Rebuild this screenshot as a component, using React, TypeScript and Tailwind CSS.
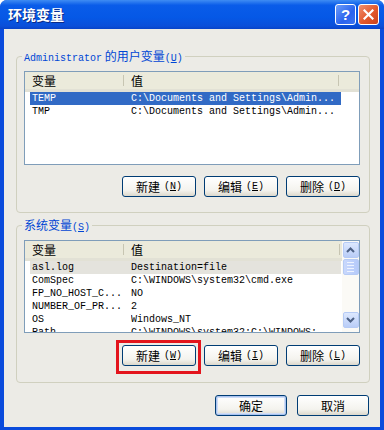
import type { ReactNode } from 'react'

const cjk = "font-['Noto_Sans_CJK_SC','Noto_Sans',sans-serif]"
const mono = "font-['Liberation_Mono','Noto_Sans_CJK_SC',monospace]"

function XpButton({ label, hot, wide = false, primary = false }: { label: string; hot?: string; wide?: boolean; primary?: boolean }) {
  return (
    <button
      className={`h-[21px] ${wide ? 'w-[72px]' : 'w-[74px]'} rounded-[3px] border border-[#003c74] bg-[linear-gradient(#ffffff,#f4f3ee_70%,#dcd8cc)] ${cjk} text-[12px] leading-none text-black flex items-center justify-center gap-[4px] ${primary ? 'shadow-[inset_0_0_0_1px_#a9c3ef,inset_0_0_0_2px_#cfdcf6]' : ''}`}
    >
      <span>{label}</span>
      {hot && (
        <span className={`${mono} text-[10px]`}>
          (<u>{hot}</u>)
        </span>
      )}
    </button>
  )
}

function GroupBox({ title, children, className = '' }: { title: ReactNode; children: ReactNode; className?: string }) {
  return (
    <div className={`relative rounded-[4px] border border-[#d0d0bf] ${className}`}>
      <span className={`absolute -top-[9px] left-[5px] px-[2px] bg-[#ecebe6] text-[12px] leading-[16px] text-[#0046d5] ${cjk}`}>
        {title}
      </span>
      {children}
    </div>
  )
}

function ListHeader({ scroll = false }: { scroll?: boolean }) {
  return (
    <div className={`flex h-[20px] shrink-0 bg-[#ebeadb] border-b-[3px] border-[#e2e1d5] ${cjk} text-[12px] text-black`}>
      <div className="w-[99px] pl-[7px] border-r border-[#c7c5b2] my-[3px] leading-[12px] flex items-center">变量</div>
      <div className={`${scroll ? 'w-[216px]' : 'w-[215px]'} pl-[7px] border-r border-[#c7c5b2] my-[3px] leading-[12px] flex items-center`}>值</div>
      <div className="flex-1" />
    </div>
  )
}

function Row({ name, value, state }: { name: string; value: string; state?: 'sel' | 'grey' }) {
  const bg = state === 'sel' ? 'bg-[#316ac5] text-white' : state === 'grey' ? 'bg-[#e4e3dd] text-black' : 'text-black'
  return (
    <div className={`ml-[5px] w-[311px] h-[13px] shrink-0 flex ${bg} ${mono} text-[10px] leading-[13px] whitespace-nowrap`}>
      <div className="w-[101px] pl-[2px] overflow-hidden">{name}</div>
      <div className="flex-1 overflow-hidden">{value}</div>
    </div>
  )
}

function Arrow({ up }: { up: boolean }) {
  return (
    <div className="h-[16px] w-[16px] rounded-[2px] border border-[#b6cbf5] bg-[linear-gradient(#dce8fe,#b9cdf7)] flex items-center justify-center">
      <svg width="9" height="6" viewBox="0 0 9 6">
        <path d={up ? 'M1 5 L4.5 1.5 L8 5' : 'M1 1 L4.5 4.5 L8 1'} fill="none" stroke="#4d6185" strokeWidth="2" />
      </svg>
    </div>
  )
}

export default function App() {
  return (
    <div className="w-[384px] h-[430px] rounded-t-[7px] bg-[#0a4bdc] flex flex-col overflow-hidden">
      {/* title bar */}
      <div className="h-[29px] shrink-0 flex items-center pl-[8px] pr-[5px] bg-[linear-gradient(#3f8cf3,#0a5ce9_18%,#0558e6_60%,#0b4fd9_90%,#0843c8)]">
        <span className={`${cjk} text-[14px] font-bold text-white [text-shadow:1px_1px_0_#0b2a87]`}>环境变量</span>
        <div className="ml-auto flex gap-[2px]">
          <div className="w-[21px] h-[21px] rounded-[3px] border border-white bg-[linear-gradient(135deg,#6e9ef9,#2a63ee_60%,#3d74f0)] flex items-center justify-center text-white text-[15px] font-bold font-['Liberation_Sans',sans-serif] leading-none">
            ?
          </div>
          <div className="w-[21px] h-[21px] rounded-[3px] border border-white bg-[linear-gradient(135deg,#f09070,#e2582c_55%,#c9431d)] flex items-center justify-center">
            <svg width="11" height="11" viewBox="0 0 11 11">
              <path d="M1.5 1.5 L9.5 9.5 M9.5 1.5 L1.5 9.5" stroke="white" strokeWidth="2.2" strokeLinecap="square" />
            </svg>
          </div>
        </div>
      </div>

      {/* body */}
      <div className="flex-1 mx-[4px] mb-[3px] bg-[#ecebe6] pl-[12px] pr-[10px] flex flex-col">
        <GroupBox
          className="mt-[27px] pt-[14px] pl-[7px] pr-[9px] pb-[15px]"
          title={
            <>
              <span className={mono + ' text-[10px]'}>Administrator</span> 的用户变量<span className={mono + ' text-[10px]'}>(<u>U</u>)</span>
            </>
          }
        >
          <div className="h-[94px] border border-[#7f9db9] bg-white flex flex-col">
            <ListHeader />
            <Row name="TEMP" value="C:\Documents and Settings\Admin..." state="sel" />
            <Row name="TMP" value="C:\Documents and Settings\Admin..." />
          </div>
          <div className="mt-[11px] flex justify-end gap-[8px]">
            <XpButton label="新建" hot="N" />
            <XpButton label="编辑" hot="E" />
            <XpButton label="删除" hot="D" />
          </div>
        </GroupBox>

        <GroupBox
          className="mt-[12px] pt-[14px] pl-[7px] pr-[9px] pb-[16px]"
          title={
            <>
              系统变量<span className={mono + ' text-[10px]'}>(<u>S</u>)</span>
            </>
          }
        >
          <div className="h-[93px] border border-[#7f9db9] bg-white flex overflow-hidden">
            <div className="flex-1 flex flex-col overflow-hidden">
              <ListHeader scroll />
              <Row name="asl.log" value="Destination=file" state="grey" />
              <Row name="ComSpec" value="C:\WINDOWS\system32\cmd.exe" />
              <Row name="FP_NO_HOST_C..." value="NO" />
              <Row name="NUMBER_OF_PR..." value="2" />
              <Row name="OS" value="Windows_NT" />
              <Row name="Path" value="C:\WINDOWS\system32;C:\WINDOWS;..." />
            </div>
            <div className="w-[17px] bg-[#fbfaf6] flex flex-col items-center pt-px pb-[4px]">
              <Arrow up />
              <div className="mt-px h-[16px] w-[16px] rounded-[2px] border border-[#b6cbf5] bg-[linear-gradient(90deg,#c9d8fc,#b5cafa)] flex flex-col items-center justify-center gap-[2px]">
                <div className="w-[7px] h-px bg-[#eef3ff]" />
                <div className="w-[7px] h-px bg-[#eef3ff]" />
                <div className="w-[7px] h-px bg-[#eef3ff]" />
                <div className="w-[7px] h-px bg-[#eef3ff]" />
              </div>
              <div className="flex-1" />
              <Arrow up={false} />
            </div>
          </div>
          <div className="mt-[12px] flex justify-end gap-[8px]">
            <div className="relative flex">
              <XpButton label="新建" hot="W" />
              <span className="absolute -left-[6px] -right-[5px] -top-[5px] -bottom-[8px] border-[3px] border-[#e3141c]" />
            </div>
            <XpButton label="编辑" hot="I" />
            <XpButton label="删除" hot="L" />
          </div>
        </GroupBox>

        <div className="mt-[12px] flex justify-end gap-[10px] pr-[1px]">
          <XpButton label="确定" wide primary />
          <XpButton label="取消" wide />
        </div>
      </div>
    </div>
  )
}
